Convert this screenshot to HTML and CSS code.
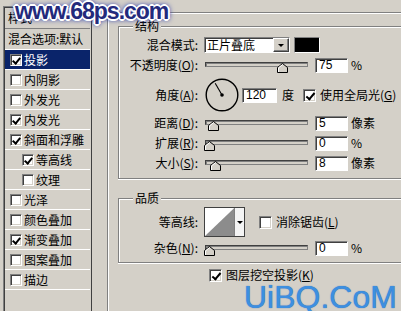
FILE: index.html
```html
<!DOCTYPE html>
<html lang="zh-CN">
<head>
    <meta charset="UTF-8">
    <title>图层样式 - 投影</title>
    <link rel="stylesheet" href="styles.css">
</head>
<body>
    <div class="dialog">
        <div class="style-list">
            <div class="list-head">样式</div>
            <div class="list-blend">混合选项:默认</div>
            <div class="list-item selected"><span class="cb on"></span>投影</div>
            <div class="list-item"><span class="cb"></span>内阴影</div>
            <div class="list-item"><span class="cb"></span>外发光</div>
            <div class="list-item"><span class="cb on"></span>内发光</div>
            <div class="list-item"><span class="cb on"></span>斜面和浮雕</div>
            <div class="list-item sub"><span class="cb on"></span>等高线</div>
            <div class="list-item sub"><span class="cb"></span>纹理</div>
            <div class="list-item"><span class="cb"></span>光泽</div>
            <div class="list-item"><span class="cb"></span>颜色叠加</div>
            <div class="list-item"><span class="cb on"></span>渐变叠加</div>
            <div class="list-item"><span class="cb"></span>图案叠加</div>
            <div class="list-item"><span class="cb"></span>描边</div>
        </div>

        <div class="group outer">
            <span class="legend">投影</span>

            <div class="group structure">
                <span class="legend">结构</span>
                <div class="row">
                    <span class="lbl">混合模式:</span>
                    <div class="select">正片叠底<span class="drop"><i class="arrow"></i></span></div>
                    <span class="swatch"></span>
                </div>
                <div class="row">
                    <span class="lbl">不透明度(<u>O</u>):</span>
                    <div class="slider"><div class="track"></div><svg class="thumb" style="left: 72px" viewBox="0 0 11 10" width="11" height="10"><polygon points="0.5,4.5 5.5,0.5 10.5,4.5 10.5,9.5 0.5,9.5" fill="#d4d0c8" stroke="#000"/><polyline points="1.5,9 1.5,4.9 5.5,1.7" fill="none" stroke="#fff"/></svg></div>
                    <span class="num">75</span>
                    <span class="unit">%</span>
                </div>
                <div class="row angle-row">
                    <span class="lbl">角度(<u>A</u>):</span>
                    <svg class="dial" viewBox="0 0 34 34" width="34" height="34">
                        <circle cx="17" cy="17" r="15.8" fill="none" stroke="#000" stroke-width="1.4"/>
                        <line x1="17" y1="17" x2="10.2" y2="5.3" stroke="#000" stroke-width="1.1"/>
                        <circle cx="17" cy="17" r="1.8" fill="#000"/>
                    </svg>
                    <span class="num wide">120</span>
                    <span class="unit deg">度</span>
                    <span class="cb big on"></span>
                    <span class="cb-text">使用全局光(<u>G</u>)</span>
                </div>
                <div class="row">
                    <span class="lbl">距离(<u>D</u>):</span>
                    <div class="slider"><div class="track"></div><svg class="thumb" style="left: 3px" viewBox="0 0 11 10" width="11" height="10"><polygon points="0.5,4.5 5.5,0.5 10.5,4.5 10.5,9.5 0.5,9.5" fill="#d4d0c8" stroke="#000"/><polyline points="1.5,9 1.5,4.9 5.5,1.7" fill="none" stroke="#fff"/></svg></div>
                    <span class="num">5</span>
                    <span class="unit">像素</span>
                </div>
                <div class="row">
                    <span class="lbl">扩展(<u>R</u>):</span>
                    <div class="slider"><div class="track"></div><svg class="thumb" style="left: -1px" viewBox="0 0 11 10" width="11" height="10"><polygon points="0.5,4.5 5.5,0.5 10.5,4.5 10.5,9.5 0.5,9.5" fill="#d4d0c8" stroke="#000"/><polyline points="1.5,9 1.5,4.9 5.5,1.7" fill="none" stroke="#fff"/></svg></div>
                    <span class="num">0</span>
                    <span class="unit">%</span>
                </div>
                <div class="row">
                    <span class="lbl">大小(<u>S</u>):</span>
                    <div class="slider"><div class="track"></div><svg class="thumb" style="left: 5px" viewBox="0 0 11 10" width="11" height="10"><polygon points="0.5,4.5 5.5,0.5 10.5,4.5 10.5,9.5 0.5,9.5" fill="#d4d0c8" stroke="#000"/><polyline points="1.5,9 1.5,4.9 5.5,1.7" fill="none" stroke="#fff"/></svg></div>
                    <span class="num">8</span>
                    <span class="unit">像素</span>
                </div>
            </div>

            <div class="group quality">
                <span class="legend">品质</span>
                <div class="row contour-row">
                    <span class="lbl">等高线:</span>
                    <div class="contour">
                        <svg class="curve" viewBox="0 0 30 28" width="30" height="28" preserveAspectRatio="none"><polygon points="0,0 30,0 0,28" fill="#fff"/><polygon points="30,0 30,28 0,28" fill="#8c8c8c"/></svg>
                        <span class="contour-drop"><i class="arrow"></i></span>
                    </div>
                    <span class="cb big"></span>
                    <span class="cb-text">消除锯齿(<u>L</u>)</span>
                </div>
                <div class="row">
                    <span class="lbl">杂色(<u>N</u>):</span>
                    <div class="slider"><div class="track"></div><svg class="thumb" style="left: -1px" viewBox="0 0 11 10" width="11" height="10"><polygon points="0.5,4.5 5.5,0.5 10.5,4.5 10.5,9.5 0.5,9.5" fill="#d4d0c8" stroke="#000"/><polyline points="1.5,9 1.5,4.9 5.5,1.7" fill="none" stroke="#fff"/></svg></div>
                    <span class="num">0</span>
                    <span class="unit">%</span>
                </div>
            </div>

            <div class="knockout">
                <span class="cb big on"></span>
                <span class="cb-text">图层挖空投影(<u>K</u>)</span>
            </div>
        </div>
    </div>

    <div class="mark-top">www.68ps.com</div>
    <div class="mark-bottom">UiBQ.CoM</div>
</body>
</html>
```

FILE: styles.css
```css
* {
    box-sizing: border-box;
}
body {
    margin: 0;
    width: 401px;
    height: 311px;
    overflow: hidden;
    position: relative;
    background: #d4d0c8;
    font-family: 'Noto Sans CJK SC', sans-serif;
    font-size: 12px;
    line-height: 14px;
    color: #000;
}
u {
    text-decoration: underline;
    text-underline-offset: 1px;
}
.dialog {
    display: flex;
    align-items: flex-start;
    padding: 6px 0 0 3px;
}

/* left list of styles, runs off the bottom of the shot */
.style-list {
    flex-shrink: 0;
    width: 89px;
    height: 305px;
    padding: 1px 1px 0 1px;
    border: 1px solid;
    border-bottom: none;
    border-color: #808080 #404040 #fff #808080;
    box-shadow: inset 1px 1px 0 #404040;
}
.list-head {
    height: 21px;
    line-height: 20px;
    padding-left: 3px;
    border-bottom: 1px solid #808080;
}
.list-blend {
    height: 21px;
    line-height: 20px;
    padding-left: 3px;
    border-bottom: 1px solid #fff;
}
.list-item {
    display: flex;
    align-items: center;
    height: 20px;
    padding-left: 5px;
    border-bottom: 1px solid #fff;
}
.list-item.sub {
    padding-left: 17px;
}
.list-item.selected {
    background: #0a246a;
    color: #fff;
}
.cb {
    position: relative;
    flex-shrink: 0;
    width: 12px;
    height: 12px;
    margin-right: 2px;
    background: #fff;
    border: 1px solid;
    border-color: #808080 #fff #fff #808080;
    box-shadow: inset 1px 1px 0 #404040, inset -1px -1px 0 #d4d0c8;
}
.cb.on::after {
    content: '';
    position: absolute;
    left: 3px;
    top: 1px;
    width: 3px;
    height: 6px;
    border: solid #000;
    border-width: 0 2px 2px 0;
    transform: rotate(40deg);
}
.cb.big {
    width: 13px;
    height: 13px;
    margin-right: 4px;
}
.cb.big.on::after {
    left: 4px;
    top: 1px;
    height: 7px;
}

/* group boxes, their right sides are cut off by the shot */
.group {
    position: relative;
    border: 1px solid #808080;
    border-right: none;
    box-shadow: inset 1px 1px 0 #fff, 0 1px 0 #fff;
}
.legend {
    position: absolute;
    top: -8px;
    left: 14px;
    padding: 0 2px;
    background: #d4d0c8;
}
.outer {
    flex-shrink: 0;
    width: 294px;
    height: 299px;
    margin: 6px 0 0 15px;
    padding: 13px 0 0 10px;
    border-bottom: none;
    box-shadow: inset 1px 1px 0 #fff;
}
.structure {
    width: 283px;
    padding: 8px 0 5px 0;
}
.quality {
    width: 283px;
    margin-top: 19px;
    padding: 8px 0 4px 0;
}
.row {
    display: flex;
    align-items: center;
    height: 20px;
}
.lbl {
    flex-shrink: 0;
    width: 79px;
    text-align: right;
    white-space: nowrap;
}

/* blend mode */
.select {
    display: flex;
    align-items: center;
    width: 86px;
    height: 16px;
    margin-left: 6px;
    padding-left: 2px;
    background: #fff;
    border: 1px solid;
    border-color: #808080 #fff #fff #808080;
    box-shadow: inset 1px 1px 0 #404040;
}
.drop {
    display: flex;
    align-items: center;
    justify-content: center;
    width: 16px;
    height: 14px;
    margin-left: auto;
    background: #d4d0c8;
    border: 1px solid;
    border-color: #fff #404040 #404040 #fff;
    box-shadow: inset -1px -1px 0 #808080;
}
.arrow {
    width: 0;
    height: 0;
    border-left: 3px solid transparent;
    border-right: 3px solid transparent;
    border-top: 3px solid #000;
}
.swatch {
    width: 26px;
    height: 16px;
    margin-left: 4px;
    background: #000;
    border: 1px solid;
    border-color: #808080 #fff #fff #808080;
}

/* sliders and number fields */
.slider {
    position: relative;
    align-self: flex-start;
    width: 103px;
    height: 12px;
    margin: 7px 0 0 7px;
}
.track {
    height: 5px;
    border: 1px solid #404040;
    border-right-color: #808080;
    border-bottom-color: #808080;
    background: #d4d0c8;
    box-shadow: inset 1px 1px 0 #808080;
}
.thumb {
    position: absolute;
    top: 1px;
    display: block;
}
.num {
    width: 33px;
    height: 15px;
    margin-left: 7px;
    padding-left: 3px;
    background: #fff;
    border: 1px solid;
    border-color: #808080 #fff #fff #808080;
    box-shadow: inset 1px 1px 0 #404040;
    font-family: 'Liberation Sans', sans-serif;
    font-size: 12px;
    line-height: 13px;
}
.unit {
    margin-left: 3px;
}

/* angle */
.angle-row {
    height: 34px;
    margin: 3px 0 1px 0;
}
.dial {
    display: block;
    margin-left: 7px;
}
.num.wide {
    width: 35px;
    margin-left: 3px;
}
.unit.deg {
    margin-left: 5px;
    margin-right: 9px;
}
.cb-text {
    white-space: nowrap;
}

/* contour */
.contour-row {
    height: 30px;
    margin-bottom: 1px;
}
.contour {
    display: flex;
    width: 41px;
    height: 30px;
    margin: 0 14px 0 6px;
    border: 1px solid #404040;
    background: #fff;
}
.curve {
    display: block;
}
.contour-drop {
    display: flex;
    align-items: center;
    justify-content: center;
    width: 10px;
    border-left: 1px solid #808080;
    background: #f4f4f4;
}

.knockout {
    display: flex;
    align-items: center;
    height: 16px;
    margin: 4px 0 0 91px;
}

/* watermarks over the screenshot */
.mark-top {
    position: absolute;
    left: 15px;
    top: 0;
    font-family: 'Liberation Sans', sans-serif;
    font-weight: bold;
    font-size: 23px;
    line-height: 1;
    letter-spacing: -1px;
    color: #232a7c;
    text-shadow: -1px -1px 0 #fff, 1px -1px 0 #fff, -1px 1px 0 #fff, 1px 1px 0 #fff,
        0 -2px 0 #fff, 0 2px 0 #fff, -2px 0 0 #fff, 2px 0 0 #fff,
        0 0 4px #3848b0, 0 0 5px #3848b0, 0 0 6px #3848b0;
}
.mark-bottom {
    position: absolute;
    left: 244px;
    top: 283px;
    font-family: 'Liberation Sans', sans-serif;
    font-size: 32px;
    line-height: 28px;
    color: #3d8fe0;
    text-shadow: 0 0 1px #1c5fb4;
}
```
